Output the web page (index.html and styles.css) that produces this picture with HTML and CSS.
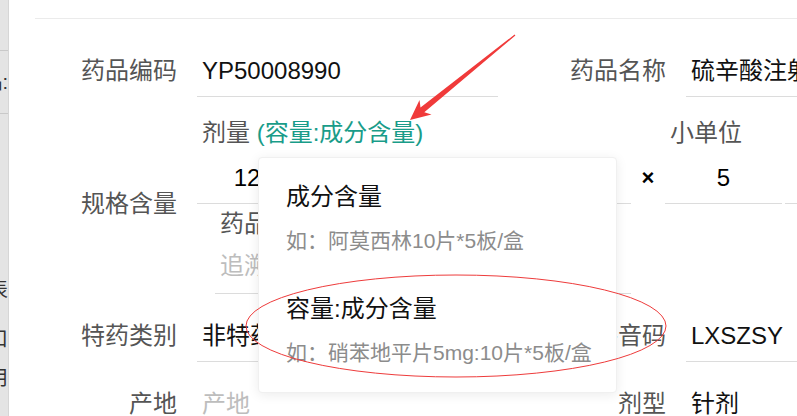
FILE: index.html
```html
<!DOCTYPE html>
<html lang="zh-CN">
<head>
    <meta charset="UTF-8">
    <meta name="viewport" content="width=device-width, initial-scale=1.0">
    <title>药品信息</title>
    <link rel="stylesheet" href="styles.css">
</head>
<body>

    <div class="page">
        <aside class="side">
            <div class="side-row side-first"></div>
            <div class="side-row side-menu"><span>药品:</span></div>
            <div class="side-row side-t1"><span>代表</span></div>
            <div class="side-row side-t2"><span>入口</span></div>
            <div class="side-row side-t3"><span>常用</span></div>
        </aside>

        <main class="main">
            <div class="form">
                <label class="lbl">药品编码</label>
                <div class="field"><span class="val">YP50008990</span></div>
                <label class="lbl">药品名称</label>
                <div class="field"><span class="val">硫辛酸注射液</span></div>

                <label class="lbl lbl-mid">规格含量</label>
                <div class="spec">
                    <div class="spec-top">
                        <div class="spec-col dose">
                            <div class="sub-lbl">剂量 <span class="teal">(容量:成分含量)</span></div>
                            <div class="spec-inputs">
                                <div class="field num">12</div>
                                <div class="field unit"></div>
                            </div>
                        </div>
                        <div class="times">×</div>
                        <div class="spec-col small">
                            <div class="sub-lbl">小单位</div>
                            <div class="spec-inputs">
                                <div class="field num2">5</div>
                                <div class="field unit"></div>
                            </div>
                        </div>
                    </div>
                    <div class="trace">
                        <div class="sub-lbl">药品追溯码</div>
                        <div class="field trace-input"><span class="ph">追溯码</span></div>
                    </div>
                </div>

                <label class="lbl">特药类别</label>
                <div class="field"><span class="val">非特药</span></div>
                <label class="lbl">拼音码</label>
                <div class="field"><span class="val">LXSZSY</span></div>

                <label class="lbl">产地</label>
                <div class="field no-line"><span class="ph">产地</span></div>
                <label class="lbl">剂型</label>
                <div class="field no-line"><span class="val">针剂</span></div>
            </div>
        </main>

        <!-- 下拉选项 -->
        <div class="dropdown">
            <div class="opt">
                <div class="opt-title">成分含量</div>
                <div class="opt-desc">如：阿莫西林10片*5板/盒</div>
            </div>
            <div class="opt">
                <div class="opt-title">容量:成分含量</div>
                <div class="opt-desc">如：硝苯地平片5mg:10片*5板/盒</div>
            </div>
        </div>

        <!-- 标注 -->
        <svg class="marks" width="797" height="416" viewBox="0 0 797 416">
            <ellipse cx="456" cy="326" rx="210" ry="51" fill="none" stroke="#ee3b3b" stroke-width="1"/>
            <polygon fill="#f03a3a" points="410,120 431.5,114.5 424.3,112.2 515.4,35.5 514.6,34.5 420.5,107.6 419.5,100 410,120"/>
        </svg>
    </div>

</body>
</html>
```

FILE: styles.css
```css
html, body {
    margin: 0;
    padding: 0;
    width: 797px;
    height: 416px;
    overflow: hidden;
    background: #fff;
}

body {
    font-family: "Liberation Sans", "Noto Sans CJK SC", sans-serif;
    font-size: 24px;
    color: #000;
}

.page {
    position: relative;
    display: flex;
    width: 797px;
    height: 416px;
}

/* left menu strip */
.side {
    width: 8px;
    flex: none;
    background: #e4e4e4;
    border-right: 1px solid #d6d6d6;
    overflow: hidden;
    font-size: 20px;
    color: #333;
}
.side-row {
    display: flex;
    justify-content: flex-end;
    white-space: nowrap;
}
.side-first { height: 50px; border-bottom: 1px solid #c9c9c9; }
.side-menu { height: 62px; line-height: 62px; border-bottom: 1px solid #c9c9c9; }
.side-t1 { margin-top: 158px; height: 36px; line-height: 36px; }
.side-t2 { margin-top: 13px; height: 36px; line-height: 36px; }
.side-t3 { margin-top: 3px; height: 36px; line-height: 36px; }

.main {
    flex: 1;
    padding: 18px 0 0 26px;
    min-width: 0;
}

.form {
    border-top: 1px solid #ebebeb;
    padding-top: 26px;
    display: grid;
    grid-template-columns: 142px 301px 148px 301px;
    column-gap: 20px;
    row-gap: 16px;
    align-items: start;
}

.lbl {
    text-align: right;
    line-height: 51px;
    color: #555;
    white-space: nowrap;
}
.lbl-mid { align-self: center; }

.field {
    height: 52px;
    box-sizing: border-box;
    line-height: 51px;
    border-bottom: 1px solid #dcdcdc;
    padding-left: 5px;
    white-space: nowrap;
    overflow: hidden;
}
.field.no-line { border-bottom-color: transparent; }

.val { color: #111; }
.ph { color: #bdbdbd; }

/* spec block */
.spec {
    grid-column: 2 / -1;
}
.spec-top {
    display: flex;
}
.sub-lbl {
    line-height: 39px;
    height: 39px;
    padding-left: 5px;
    color: #555;
    white-space: nowrap;
}
.teal { color: #199c89; }

.spec-inputs {
    display: flex;
    gap: 3px;
}
.dose { width: 434px; }
.dose .num { width: 100px; padding: 0; text-align: center; }
.dose .unit { flex: 1; }
.times {
    width: 34px;
    padding-top: 39px;
    line-height: 51px;
    text-align: center;
    font-weight: bold;
    font-size: 22px;
}
.small { width: 300px; }
.small .num2 { width: 117px; padding: 0; text-align: center; }
.small .unit { flex: 1; }

.trace {
    margin-left: 18px;
    width: 416px;
}
.trace .sub-lbl {
    height: 40px;
    line-height: 40px;
}
.trace-input {
    height: 50px;
    line-height: 44px;
}

/* dropdown */
.dropdown {
    position: absolute;
    left: 258px;
    top: 157px;
    width: 359px;
    height: 236px;
    box-sizing: border-box;
    padding: 6px 0 4px;
    background: #fff;
    border: 1px solid #f0f0f0;
    border-radius: 4px;
    box-shadow: 0 2px 12px rgba(0,0,0,0.08);
}
.opt {
    padding: 15px 27px 17px;
}
.opt-title {
    line-height: 36px;
    color: #111;
}
.opt-desc {
    margin-top: 8px;
    line-height: 36px;
    font-size: 21px;
    color: #8c8c8c;
    white-space: nowrap;
}

.marks {
    position: absolute;
    left: 0;
    top: 0;
    pointer-events: none;
}
```
